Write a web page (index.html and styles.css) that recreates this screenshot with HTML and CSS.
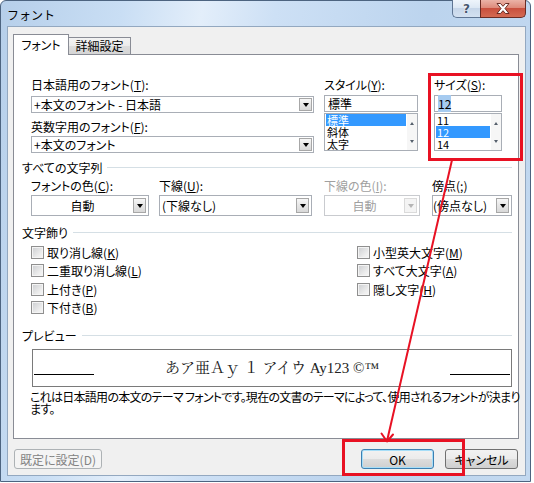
FILE: index.html
```html
<!DOCTYPE html>
<html lang="ja">
<head>
<meta charset="utf-8">
<title>フォント</title>
<link rel="stylesheet" href="styles.css">
</head>
<body>
<div class="window">
  <div class="titlebar">
    <span class="title">フォント</span>
    <div class="caption">
      <div class="cbtn help">?</div>
      <div class="cbtn close">
        <svg width="14" height="11" viewBox="0 0 14 11"><polygon points="1,0.5 4.5,0.5 7,3.3 9.5,0.5 13,0.5 9,5.5 13,10.5 9.5,10.5 7,7.7 4.5,10.5 1,10.5 5,5.5" fill="#fff" stroke="#5a1d15" stroke-width="0.9" stroke-linejoin="round"/></svg>
      </div>
    </div>
  </div>
  <div class="client">
    <div class="tabs">
      <div class="tab active">フォント</div>
      <div class="tab">詳細設定</div>
    </div>
    <div class="panel">
      <div class="font-grid">
        <div class="col">
          <label class="lbl">日本語用のフォント(<u>T</u>):</label>
          <div class="combo sm first"><span class="val">+本文のフォント - 日本語</span><i class="drop"></i></div>
          <label class="lbl second">英数字用のフォント(<u>F</u>):</label>
          <div class="combo sm after2"><span class="val">+本文のフォント</span><i class="drop"></i></div>
        </div>
        <div class="col">
          <label class="lbl">スタイル(<u>Y</u>):</label>
          <div class="textbox">標準</div>
          <div class="listbox">
            <div class="items">
              <div class="item sel">標準</div>
              <div class="item">斜体</div>
              <div class="item">太字</div>
            </div>
            <div class="vscroll"><span class="sb up"></span><span class="sb down"></span></div>
          </div>
        </div>
        <div class="col col-size">
          <label class="lbl">サイズ(<u>S</u>):</label>
          <div class="textbox"><span class="hl">12</span></div>
          <div class="listbox">
            <div class="items">
              <div class="item">11</div>
              <div class="item sel">12</div>
              <div class="item">14</div>
            </div>
            <div class="vscroll"><span class="sb up"></span><span class="sb down"></span></div>
          </div>
        </div>
      </div>

      <div class="group g1">すべての文字列</div>
      <div class="fx-row">
        <div class="field f1">
          <label class="lbl">フォントの色(<u>C</u>):</label>
          <div class="combo lg"><span class="val center">自動</span><i class="drop"></i></div>
        </div>
        <div class="field f2">
          <label class="lbl">下線(<u>U</u>):</label>
          <div class="combo lg"><span class="val">(下線なし)</span><i class="drop"></i></div>
        </div>
        <div class="field f3">
          <label class="lbl dis">下線の色(<u>I</u>):</label>
          <div class="combo lg disabled"><span class="val center">自動</span><i class="drop"></i></div>
        </div>
        <div class="field f4">
          <label class="lbl">傍点(;)</label>
          <div class="combo lg"><span class="val tight">(傍点なし)</span><i class="drop"></i></div>
        </div>
      </div>

      <div class="group g2">文字飾り</div>
      <div class="checks">
        <div class="chk"><i class="box"></i>取り消し線(<u>K</u>)</div>
        <div class="chk"><i class="box"></i>二重取り消し線(<u>L</u>)</div>
        <div class="chk"><i class="box"></i>上付き(<u>P</u>)</div>
        <div class="chk"><i class="box"></i>下付き(<u>B</u>)</div>
        <div class="chk"><i class="box"></i>小型英大文字(<u>M</u>)</div>
        <div class="chk"><i class="box"></i>すべて大文字(<u>A</u>)</div>
        <div class="chk"><i class="box"></i>隠し文字(<u>H</u>)</div>
      </div>

      <div class="group g3">プレビュー</div>
      <div class="preview">
        <span class="pline"></span>
        <span class="ptext">あア亜Ａｙ １ アイウ Ay123 ©™</span>
        <span class="pline"></span>
      </div>
      <p class="desc">これは日本語用の本文のテーマ フォントです。現在の文書のテーマによって、使用されるフォントが決まり<br>ます。</p>
    </div>
    <div class="buttons">
      <button class="btn disabled">既定に設定(D)</button>
      <button class="btn ok">OK</button>
      <button class="btn cancel">キャンセル</button>
    </div>
  </div>
</div>

<div class="redbox size-box"></div>
<div class="redbox ok-box"></div>
<svg class="arrow" width="534" height="483" viewBox="0 0 534 483">
  <line x1="452" y1="160" x2="387" y2="441" stroke="#e81123" stroke-width="2"/>
  <polyline points="381.5,433.5 387,441.5 393,434.5" fill="none" stroke="#e81123" stroke-width="2" stroke-linecap="round" stroke-linejoin="round"/>
</svg>
</body>
</html>
```

FILE: styles.css
```css
* { box-sizing: border-box; }
html, body { margin: 0; padding: 0; }
body {
  position: relative;
  width: 534px;
  height: 483px;
  overflow: hidden;
  background: #fff;
  font-family: "Noto Sans CJK JP", "Noto Sans", sans-serif;
  font-size: 12px;
  color: #000;
  font-feature-settings: "palt";
}
u { text-decoration: underline; text-underline-offset: 1px; }

/* window frame */
.window {
  width: 531px;
  height: 482px;
  border: 1px solid #4d6480;
  border-radius: 6px 6px 0 0;
  padding-left: 6px;
  background: linear-gradient(100deg, #b6cfea 0%, #c9def4 20%, #e3eefa 33%, #cde0f5 45%, #bcd4ee 70%, #c3d9f0 100%);
}
.titlebar {
  display: flex;
  align-items: flex-start;
  height: 25px;
}
.title {
  font-feature-settings: normal;
  line-height: 25px;
  padding-top: 1px;
  font-size: 12px;
}
.caption {
  display: flex;
  margin: -1px 4px 0 auto;
}
.cbtn {
  height: 18px;
  display: flex;
  align-items: center;
  justify-content: center;
}
.help {
  width: 28px;
  border: 1px solid #5f7593;
  border-top: none;
  border-right: none;
  border-radius: 0 0 0 5px;
  background: linear-gradient(#eef4fb, #dde8f4 45%, #c7d6e9 50%, #d3e1f1);
  font-family: "DejaVu Sans", sans-serif;
  font-weight: bold;
  font-size: 12px;
  color: #44566e;
  text-shadow: 0 0 2px #fff, 0 0 1px #fff;
}
.close {
  width: 46px;
  border: 1px solid #6a2c24;
  border-top: none;
  border-radius: 0 0 5px 0;
  background: linear-gradient(#ebb3a7, #de8b7b 45%, #c9503e 50%, #d46a52);
}

/* client */
.client {
  width: 519px;
  height: 450px;
  border: 1px solid #93a8c0;
  background: #f0f0f0;
  padding: 7px 0 0 5px;
}
.tabs {
  display: flex;
  align-items: flex-end;
  height: 20px;
}
.tab {
  border: 1px solid #898c95;
  text-align: center;
}
.tab.active {
  width: 56px;
  height: 21px;
  margin-bottom: -1px;
  border-bottom: none;
  background: #fff;
  position: relative;
  z-index: 1;
  line-height: 19px;
}
.tab:not(.active) {
  width: 62px;
  height: 17px;
  border-left: none;
  border-bottom: none;
  line-height: 16px;
  background: linear-gradient(#f3f3f3, #ebebeb 50%, #dddddd 50%, #d5d5d5);
}
.panel {
  width: 506px;
  height: 385px;
  border: 1px solid #898c95;
  background: #fff;
  padding-top: 23px;
}

/* labels */
.lbl {
  display: block;
  line-height: 14px;
  height: 14px;
  white-space: nowrap;
}
.lbl.dis { color: #a0a0a0; }

/* font grid */
.font-grid {
  display: grid;
  grid-template-columns: 283px 94px 74px;
  column-gap: 10px;
  margin-left: 17px;
  align-items: start;
}
.col-size { margin-left: 6px; }
.combo {
  display: flex;
  align-items: center;
  border: 1px solid #a9aeb6;
  background: #fff;
  overflow: hidden;
}
.combo.sm { height: 17px; }
.combo.first { margin-top: 4px; }
.lbl.second { margin-top: 7px; }
.combo.after2 { margin-top: 2px; }
.val {
  flex: 1;
  padding-left: 2px;
  white-space: nowrap;
  overflow: hidden;
  line-height: 15px;
}
.val.center { text-align: center; padding-left: 0; }
.val.tight { padding-left: 0; }
.drop {
  flex: none;
  width: 13px;
  height: 13px;
  margin-right: 1px;
  border: 1px solid #a7a7a7;
  background: linear-gradient(#f7f7f7, #e6e6e6 50%, #d8d8d8);
  display: flex;
  align-items: center;
  justify-content: center;
}
.drop::after {
  content: "";
  border-top: 4px solid #000;
  border-left: 3px solid transparent;
  border-right: 3px solid transparent;
  margin-top: 1px;
}
.combo.lg { height: 21px; }
.combo.lg .drop { height: 15px; margin-right: 2px; }
.combo.disabled { border-color: #c9cbcf; color: #a0a0a0; }
.combo.disabled .drop { border-color: #dadada; background: #f4f4f4; }
.combo.disabled .drop::after { border-top-color: #b5b5b5; }

.textbox {
  margin-top: 3px;
  height: 17px;
  border: 1px solid #a9aeb6;
  background: #fff;
  padding-left: 3px;
  line-height: 15px;
}
.hl { background: #a6cbf0; }
.listbox {
  margin-top: 1px;
  height: 38px;
  display: flex;
  border: 1px solid #a9aeb6;
  background: #fff;
}
.items { flex: 1; padding: 0 1px; }
.item {
  height: 12px;
  line-height: 12px;
  font-size: 11px;
  padding-left: 1px;
}
.item.sel { background: #3399ff; color: #fff; }
.vscroll {
  width: 10px;
  display: flex;
  flex-direction: column;
  background: #f6f6f6;
}
.sb {
  flex: 1;
  display: flex;
  align-items: center;
  justify-content: center;
}
.sb.up::after {
  content: "";
  border-bottom: 3px solid #56606c;
  border-left: 2.5px solid transparent;
  border-right: 2.5px solid transparent;
}
.sb.down::after {
  content: "";
  border-top: 3px solid #56606c;
  border-left: 2.5px solid transparent;
  border-right: 2.5px solid transparent;
}

/* group titles */
.group {
  display: flex;
  align-items: center;
  line-height: 15px;
  height: 15px;
  padding-left: 8px;
  margin-right: 6px;
}
.group::after {
  content: "";
  flex: 1;
  height: 1px;
  background: #d5dfe5;
  margin-left: 5px;
}
.g1 { margin-top: 7px; }
.g2 { margin-top: 9px; }
.g3 { margin-top: 11px; }

/* effects row */
.fx-row {
  display: flex;
  margin: 4px 0 0 17px;
}
.field .combo { margin-top: 2px; }
.f1 { width: 118px; }
.f2 { width: 153px; margin-left: 10px; }
.f3 { width: 96px; margin-left: 12px; }
.f4 { width: 80px; margin-left: 12px; }

/* checks */
.checks {
  display: grid;
  grid-template-columns: 326px auto;
  grid-template-rows: repeat(4, 18.5px);
  grid-auto-flow: column;
  margin: 3px 0 0 17px;
}
.chk {
  display: flex;
  align-items: center;
  white-space: nowrap;
}
.box {
  width: 13px;
  height: 13px;
  margin-right: 3px;
  border: 1px solid #8f8f8f;
  background: linear-gradient(135deg, #cbcdd0, #eeeeee 70%, #f6f6f6);
  box-shadow: inset 0 0 0 1px #f4f4f4;
}

/* preview */
.preview {
  display: flex;
  align-items: center;
  margin: 6px 0 0 18px;
  width: 480px;
  height: 38px;
  border: 1px solid #7a7a7a;
  padding: 0 1px;
}
.pline {
  width: 60px;
  height: 1px;
  background: #000;
  margin-top: 13px;
}
.ptext {
  flex: 1;
  text-align: center;
  font-family: "Liberation Serif", "Noto Serif CJK JP", "Noto Sans CJK JP", serif;
  font-feature-settings: normal;
  font-size: 15px;
  line-height: 18px;
  height: 18px;
  color: #222;
  white-space: nowrap;
}
.desc {
  margin: 4px 0 0 16px;
  line-height: 12px;
  white-space: nowrap;
  letter-spacing: -0.72px;
}

/* bottom buttons */
.buttons {
  display: flex;
  margin: 10px 7px 0 1px;
}
.btn {
  height: 20px;
  padding: 0;
  font-family: inherit;
  font-size: 12px;
  font-feature-settings: "palt";
  border: 1px solid #707070;
  border-radius: 3px;
  background: linear-gradient(#f2f2f2, #ebebeb 50%, #dddddd 50%, #cfcfcf);
  color: #000;
}
.btn.disabled {
  width: 88px;
  border-color: #adb2b5;
  background: #f4f4f4;
  color: #838383;
}
.btn.ok {
  width: 73px;
  margin-left: auto;
  border-color: #3c7fb1;
  box-shadow: inset 0 0 0 1px #a6def8;
}
.btn.cancel {
  width: 73px;
  margin-left: 11px;
}

/* annotations */
.redbox {
  position: absolute;
  border: 3px solid #e81123;
}
.size-box { left: 428px; top: 73px; width: 95px; height: 88px; }
.ok-box { left: 342px; top: 439px; width: 123px; height: 37px; }
.arrow { position: absolute; left: 0; top: 0; pointer-events: none; }
```
